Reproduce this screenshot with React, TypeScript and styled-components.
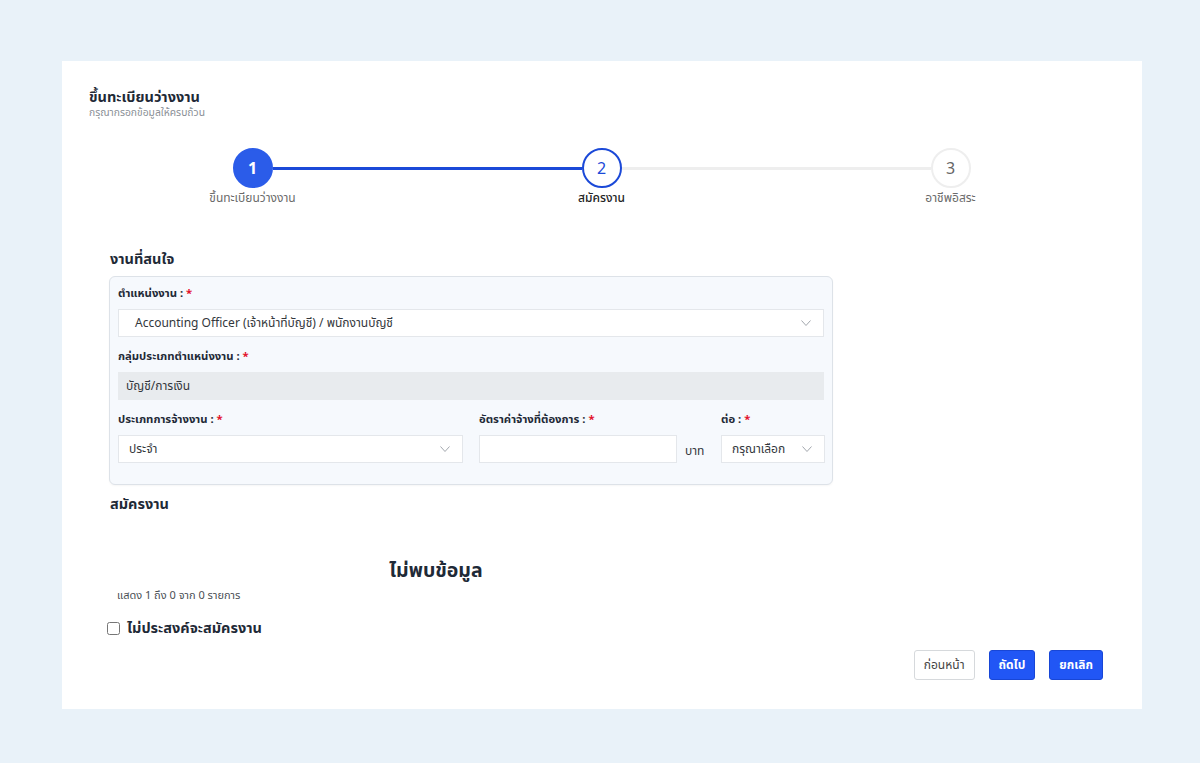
import React from 'react';
import styled, {createGlobalStyle} from 'styled-components';

const GlobalStyle = createGlobalStyle`
    body {
        margin: 0;
        background: #e9f2f9;
        font-family: 'Noto Sans', 'Noto Sans Thai', sans-serif;
        color: #212529;
    }
`;

type StepState = 'done' | 'active' | 'todo';

const steps: {label: string; state: StepState}[] = [
    {label: 'ขึ้นทะเบียนว่างงาน', state: 'done'},
    {label: 'สมัครงาน', state: 'active'},
    {label: 'อาชีพอิสระ', state: 'todo'},
];

const Chevron = () => (
    <svg width='10' height='6' viewBox='0 0 10 6' fill='none'>
        <path d='M0.5 0.5L5 5.5L9.5 0.5' stroke='#a2a7ad' strokeWidth='1'/>
    </svg>
);

const App = () => {
    return (
        <>
            <GlobalStyle/>
            <Page>
                <Card>
                    <Title>ขึ้นทะเบียนว่างงาน</Title>
                    <Subtitle>กรุณากรอกข้อมูลให้ครบถ้วน</Subtitle>

                    <Stepper>
                        {steps.map((step, i) => (
                            <Step
                                key={step.label}
                                $line={i < steps.length - 1 ? (step.state === 'done' ? 'blue' : 'grey') : undefined}
                            >
                                <Circle $state={step.state}>{i + 1}</Circle>
                                <StepLabel $state={step.state}>{step.label}</StepLabel>
                            </Step>
                        ))}
                    </Stepper>

                    <Form>
                        <SectionTitle>งานที่สนใจ</SectionTitle>
                        <Panel>
                            <Label>ตำแหน่งงาน : <Req>*</Req></Label>
                            <Select $indent={16}>
                                <span>Accounting Officer (เจ้าหน้าที่บัญชี) / พนักงานบัญชี</span>
                                <Chevron/>
                            </Select>

                            <Label>กลุ่มประเภทตำแหน่งงาน : <Req>*</Req></Label>
                            <Disabled>บัญชี/การเงิน</Disabled>

                            <Row>
                                <Field $width={345}>
                                    <Label>ประเภทการจ้างงาน : <Req>*</Req></Label>
                                    <Select $indent={10}>
                                        <span>ประจำ</span>
                                        <Chevron/>
                                    </Select>
                                </Field>
                                <Field $width={226}>
                                    <Label>อัตราค่าจ้างที่ต้องการ : <Req>*</Req></Label>
                                    <WageLine>
                                        <Input/>
                                        <Unit>บาท</Unit>
                                    </WageLine>
                                </Field>
                                <Field $width={104}>
                                    <Label>ต่อ : <Req>*</Req></Label>
                                    <Select $indent={10}>
                                        <span>กรุณาเลือก</span>
                                        <Chevron/>
                                    </Select>
                                </Field>
                            </Row>
                        </Panel>

                        <SectionTitle $top={8}>สมัครงาน</SectionTitle>
                        <Empty>ไม่พบข้อมูล</Empty>
                        <Info>แสดง 1 ถึง 0 จาก 0 รายการ</Info>
                        <Check>
                            <Box type='checkbox'/>
                            <span>ไม่ประสงค์จะสมัครงาน</span>
                        </Check>
                    </Form>

                    <Actions>
                        <Button $variant='outline'>ก่อนหน้า</Button>
                        <Button $variant='primary'>ถัดไป</Button>
                        <Button $variant='primary'>ยกเลิก</Button>
                    </Actions>
                </Card>
            </Page>
        </>
    );
};

const Page = styled.div`
    padding: 61px 58px 54px 62px;
`;

const Card = styled.div`
    width: 1080px;
    height: 648px;
    box-sizing: border-box;
    background: #ffffff;
    padding: 24px 0 0;
    display: flex;
    flex-direction: column;
`;

const Title = styled.div`
    margin-left: 27px;
    font-size: 14.5px;
    font-weight: 700;
    color: #1f2a37;
    line-height: 22px;
`;

const Subtitle = styled.div`
    margin-left: 27px;
    margin-top: -2px;
    font-size: 10.3px;
    color: #8a8f96;
    line-height: 14px;
`;

const Stepper = styled.div`
    display: grid;
    grid-template-columns: repeat(3, 1fr);
    padding: 0 17px 0 16px;
    margin-top: 29px;
`;

const Step = styled.div<{$line?: 'blue' | 'grey'}>`
    position: relative;
    display: flex;
    flex-direction: column;
    align-items: center;

    &::after {
        content: '';
        display: ${({$line}) => ($line ? 'block' : 'none')};
        position: absolute;
        top: 19px;
        left: calc(50% + 20px);
        width: calc(100% - 40px);
        height: 3px;
        background: ${({$line}) => ($line === 'blue' ? '#1b49d8' : '#eeeeee')};
    }
`;

const Circle = styled.div<{$state: StepState}>`
    width: 40px;
    height: 40px;
    box-sizing: border-box;
    border-radius: 50%;
    display: flex;
    align-items: center;
    justify-content: center;
    font-size: 16px;
    background: ${({$state}) => ($state === 'done' ? '#2b5ce9' : '#ffffff')};
    color: ${({$state}) => ($state === 'done' ? '#ffffff' : $state === 'active' ? '#1b49d8' : '#666666')};
    border: 2px solid ${({$state}) => ($state === 'done' ? '#2b5ce9' : $state === 'active' ? '#1b49d8' : '#eeeeee')};
    font-weight: ${({$state}) => ($state === 'done' ? 700 : 400)};
`;

const StepLabel = styled.div<{$state: StepState}>`
    margin-top: 2px;
    font-size: 12px;
    line-height: 16px;
    color: ${({$state}) => ($state === 'active' ? '#222222' : '#6b6b6b')};
    font-weight: ${({$state}) => ($state === 'active' ? 500 : 400)};
`;

const Form = styled.div`
    width: 724px;
    margin: 42px 0 0 47px;
    display: flex;
    flex-direction: column;
`;

const SectionTitle = styled.div<{$top?: number}>`
    margin-top: ${({$top}) => $top ?? 0}px;
    padding-left: 1px;
    font-size: 14.5px;
    font-weight: 700;
    color: #1f2a37;
    line-height: 20px;
`;

const Panel = styled.div`
    margin-top: 8px;
    background: #f6f9fd;
    border: 1px solid #dde2e8;
    border-radius: 6px;
    padding: 6px 8px 21px;
    box-shadow: 0 1px 2px rgba(0, 0, 0, 0.04);
    display: flex;
    flex-direction: column;
`;

const Label = styled.div`
    font-size: 11.3px;
    font-weight: 700;
    color: #1f2a37;
    line-height: 16px;
    margin: 2px 0 8px;
`;

const Req = styled.span`
    color: #e3102b;
`;

const Select = styled.div<{$indent: number}>`
    height: 28px;
    box-sizing: border-box;
    background: #ffffff;
    border: 1px solid #e4e7eb;
    display: flex;
    align-items: center;
    justify-content: space-between;
    padding: 0 12px 0 ${({$indent}) => $indent}px;
    font-size: 12px;
    color: #33373c;
    margin-bottom: 9px;
`;

const Disabled = styled.div`
    height: 28px;
    box-sizing: border-box;
    background: #e8ebee;
    display: flex;
    align-items: center;
    padding: 0 8px;
    font-size: 12px;
    color: #33373c;
    margin-bottom: 9px;
`;

const Row = styled.div`
    display: flex;
    gap: 16px;
`;

const Field = styled.div<{$width: number}>`
    width: ${({$width}) => $width}px;
    flex-shrink: 0;
    display: flex;
    flex-direction: column;

    & > div:last-child {
        margin-bottom: 0;
    }
`;

const WageLine = styled.div`
    display: flex;
    align-items: center;
    gap: 8px;
`;

const Input = styled.div`
    width: 198px;
    height: 28px;
    box-sizing: border-box;
    background: #ffffff;
    border: 1px solid #e4e7eb;
`;

const Unit = styled.span`
    font-size: 12px;
    color: #33373c;
    padding-top: 4px;
`;

const Empty = styled.div`
    width: 654px;
    margin-top: 44px;
    text-align: center;
    font-size: 19.5px;
    font-weight: 700;
    color: #1f2a37;
    line-height: 26px;
`;

const Info = styled.div`
    margin: 4px 0 0 8px;
    font-size: 11px;
    color: #4a4f55;
    line-height: 16px;
`;

const Check = styled.label`
    margin-top: 14px;
    display: flex;
    align-items: center;
    gap: 7px;
    font-size: 14.5px;
    font-weight: 700;
    color: #1f2a37;
`;

const Box = styled.input`
    margin: 0 0 0 -2px;
    width: 13px;
    height: 13px;
`;

const Actions = styled.div`
    display: flex;
    justify-content: flex-end;
    gap: 14px;
    padding-right: 39px;
    margin-top: 10px;
`;

const Button = styled.button<{$variant: 'outline' | 'primary'}>`
    height: 30px;
    padding: 0 9px;
    border-radius: 3px;
    font-family: inherit;
    font-size: 12px;
    font-weight: ${({$variant}) => ($variant === 'primary' ? 700 : 400)};
    background: ${({$variant}) => ($variant === 'primary' ? '#2156f5' : '#ffffff')};
    color: ${({$variant}) => ($variant === 'primary' ? '#ffffff' : '#444444')};
    border: 1px solid ${({$variant}) => ($variant === 'primary' ? '#1846d6' : '#d6d9dc')};
`;

export default App;
